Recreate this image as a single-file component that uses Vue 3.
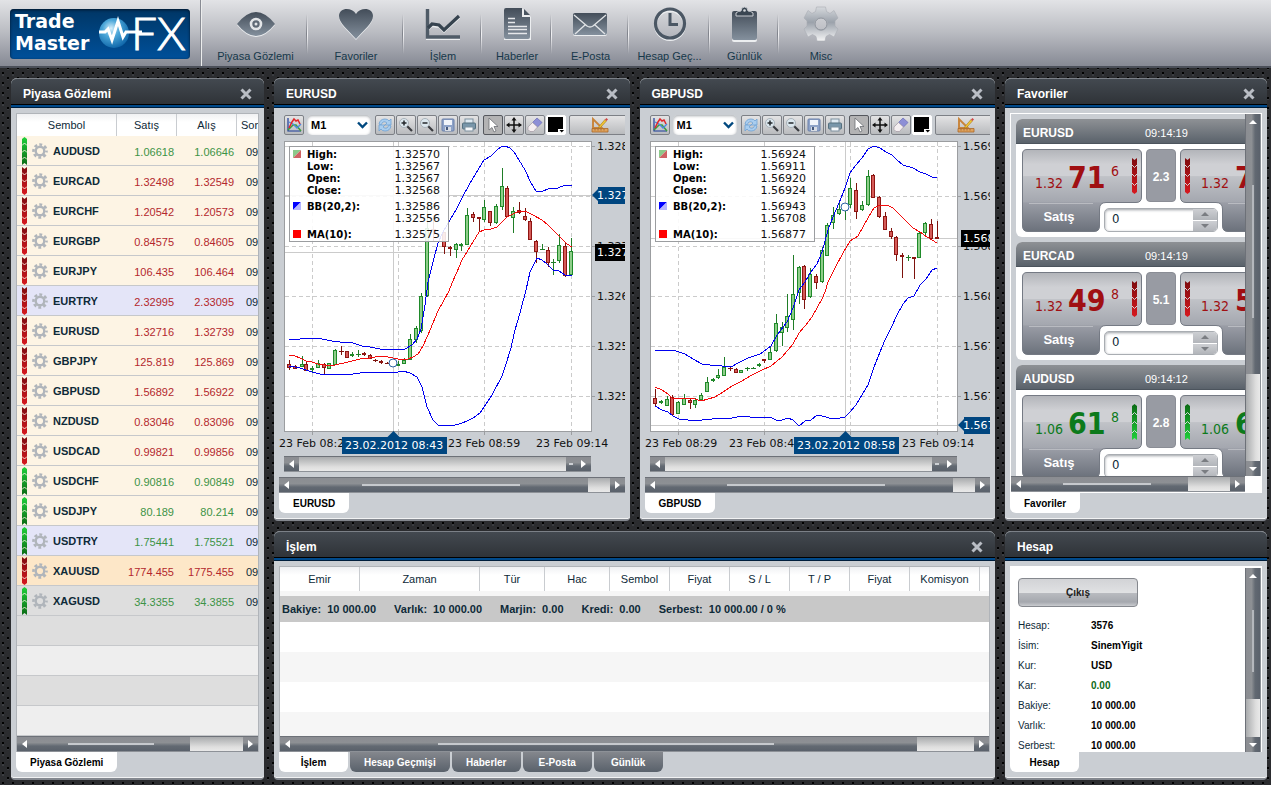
<script setup>
const navItems = [
  { label: 'Piyasa Gözlemi', icon: 'eye', width: 105 },
  { label: 'Favoriler', icon: 'heart', width: 96 },
  { label: 'İşlem', icon: 'trend', width: 78 },
  { label: 'Haberler', icon: 'news', width: 70 },
  { label: 'E-Posta', icon: 'mail', width: 77 },
  { label: 'Hesap Geç...', icon: 'clock', width: 81 },
  { label: 'Günlük', icon: 'clipboard', width: 69 },
  { label: 'Misc', icon: 'cog', width: 84 }
]

const quotes = [
  ['AUDUSD', '1.06618', '1.06646', 'up', 'cream'],
  ['EURCAD', '1.32498', '1.32549', 'down', 'cream'],
  ['EURCHF', '1.20542', '1.20573', 'down', 'cream'],
  ['EURGBP', '0.84575', '0.84605', 'down', 'cream'],
  ['EURJPY', '106.435', '106.464', 'down', 'cream'],
  ['EURTRY', '2.32995', '2.33095', 'down', 'lilac'],
  ['EURUSD', '1.32716', '1.32739', 'down', 'cream'],
  ['GBPJPY', '125.819', '125.869', 'down', 'cream'],
  ['GBPUSD', '1.56892', '1.56922', 'down', 'cream'],
  ['NZDUSD', '0.83046', '0.83096', 'down', 'cream'],
  ['USDCAD', '0.99821', '0.99856', 'down', 'cream'],
  ['USDCHF', '0.90816', '0.90849', 'up', 'cream'],
  ['USDJPY', '80.189', '80.214', 'up', 'cream'],
  ['USDTRY', '1.75441', '1.75521', 'up', 'lilac'],
  ['XAUUSD', '1774.455', '1775.455', 'down', 'peach'],
  ['XAGUSD', '34.3355', '34.3855', 'up', 'silver']
]

const tools = ['refresh', 'zoomin', 'zoomout', 'save', 'print']

// Series are stored in thirds of a pixel; the lower half of the plot starts at LOW.
const LOW = 645
const TOP = 189
const lower = (rows) => rows.map(([x, ...ys]) => [x, ...ys.map((y) => (typeof y === 'number' ? y + LOW : y))])

function makeChart(c) {
  const px = (x) => Math.round((x - c.origin) / 3)
  const py = (y) => Math.round((y - TOP) / 3)
  const line = (pts) => pts.map(([x, y]) => `${px(x)},${py(y)}`).join(' ')
  return {
    ...c,
    upperLine: line(c.upper),
    lowerLine: line(c.lowerBand),
    maLine: line(c.ma),
    bars: c.candles.map(([x, hi, lo, a, b, d]) => ({
      x: px(x), hi: py(hi), lo: py(lo), top: py(a), h: Math.max(0, py(b) - py(a)), cls: d === 'u' ? 'rise' : 'fall'
    })),
    marker: { x: px(c.cross[0]), y: py(c.cross[1]) },
    crossY: py(c.crossY),
    lastY: py(c.lastY),
    tagX: px(c.tagX)
  }
}

const charts = [
  makeChart({
    name: 'EURUSD', origin: 27,
    legend: ['1.32570', '1.32567', '1.32567', '1.32568', '1.32586', '1.32556', '1.32575'],
    axis: ['1.328', '1.327', '1.327', '1.326', '1.325', '1.325'],
    crossLabel: '1.327', lastLabel: '1.327', crossTime: '23.02.2012 08:43',
    times: ['23 Feb 08:28', '23 Feb 08:43', '23 Feb 08:59', '23 Feb 09:14'],
    cross: [370, 865], crossY: 361, lastY: 530, tagX: 216,
    upper: [
      ...lower([[58, 148], [90, 146], [130, 145], [155, 148], [185, 154], [210, 157], [240, 157], [275, 169], [300, 172], [330, 178], [405, 178], [425, 165], [440, 148], [452, 118], [458, 80], [464, 45]]),
      [475, 620], [490, 560], [505, 505], [520, 470], [540, 435], [560, 400], [580, 362], [608, 308], [625, 285], [643, 256], [662, 242], [680, 226], [695, 214], [706, 213], [720, 220], [732, 230], [748, 254], [765, 284], [782, 325], [798, 348], [820, 348], [835, 343], [865, 340], [885, 331], [906, 331]
    ],
    lowerBand: [
      ...lower([[58, 228], [75, 230], [90, 235], [108, 240], [125, 245], [150, 252], [250, 252], [290, 247], [385, 247], [400, 244], [420, 250], [440, 262], [455, 290], [470, 350], [490, 390], [505, 405], [545, 408], [575, 398], [590, 394], [610, 384], [630, 368], [643, 350], [665, 315], [695, 258], [705, 230], [722, 175], [735, 120], [750, 70], [768, 0]]),
      [780, 590], [800, 550], [815, 555], [830, 568], [850, 585], [868, 587], [885, 600], [905, 604]
    ],
    ma: [
      ...lower([[58, 196], [75, 199], [90, 204], [108, 213], [125, 216], [145, 222], [165, 225], [195, 224], [235, 216], [270, 208], [300, 204], [330, 199], [355, 200], [370, 205], [385, 208], [415, 207], [430, 200], [443, 192], [460, 168], [475, 134], [490, 100], [505, 62], [520, 36], [537, 2]]),
      [545, 625], [560, 592], [577, 555], [608, 500], [628, 470], [643, 465], [662, 463], [680, 457], [695, 442], [712, 425], [735, 414], [748, 409], [770, 411], [790, 421], [815, 434], [835, 450], [855, 472], [875, 493], [890, 507], [906, 517]
    ],
    candles: [
      ...lower([[58, 210, 240, 222, 230, 'd'], [75, 225, 235, 229, 233, 'd'], [95, 198, 228, 223, 227, 'u'], [109, 215, 244, 222, 241, 'd'], [127, 228, 250, 235, 236, 'u'], [145, 210, 235, 220, 230, 'u'], [163, 220, 252, 222, 230, 'd'], [177, 218, 236, 220, 234, 'u'], [195, 177, 225, 181, 221, 'u'], [214, 168, 196, 183, 184, 'd'], [231, 182, 202, 184, 201, 'd'], [247, 186, 202, 192, 196, 'u'], [265, 180, 202, 191, 192, 'u'], [283, 186, 198, 189, 193, 'd'], [300, 193, 208, 196, 205, 'd'], [316, 206, 217, 210, 211, 'd'], [334, 211, 221, 214, 215, 'd'], [352, 215, 222, 219, 220, 'd'], [385, 214, 226, 221, 224, 'u'], [402, 205, 218, 209, 218, 'u'], [420, 133, 210, 148, 208, 'u'], [437, 107, 158, 115, 146, 'u'], [453, 8, 129, 18, 119, 'u']]),
      [472, 400, 665, 460, 660, 'u'], [490, 430, 500, 461, 462, 'd'], [522, 470, 537, 472, 512, 'd'], [540, 512, 543, 516, 520, 'd'], [558, 505, 548, 507, 523, 'u'], [574, 503, 528, 508, 509, 'u'], [591, 400, 510, 420, 508, 'u'], [609, 410, 440, 417, 427, 'd'], [628, 425, 470, 427, 428, 'd'], [643, 376, 440, 396, 433, 'u'], [659, 408, 453, 409, 442, 'd'], [678, 388, 446, 394, 442, 'u'], [696, 280, 405, 333, 394, 'u'], [711, 333, 425, 339, 422, 'd'], [730, 397, 473, 409, 425, 'u'], [747, 380, 418, 406, 410, 'd'], [765, 400, 437, 423, 433, 'd'], [780, 430, 494, 438, 491, 'd'], [798, 495, 563, 499, 527, 'd'], [816, 507, 525, 522, 523, 'u'], [834, 516, 575, 526, 560, 'd'], [850, 552, 600, 561, 562, 'u'], [867, 478, 563, 510, 556, 'u'], [885, 503, 607, 514, 599, 'd'], [903, 490, 600, 529, 596, 'u']
    ]
  }),
  makeChart({
    name: 'GBPUSD', origin: 30,
    legend: ['1.56924', '1.56911', '1.56920', '1.56924', '1.56943', '1.56708', '1.56877'],
    axis: ['1.569', '1.569', '1.568', '1.568', '1.567', '1.567'],
    crossLabel: '1.567', lastLabel: '1.568', crossTime: '23.02.2012 08:58',
    times: ['23 Feb 08:29', '23 Feb 08:44', '23 Feb 08:59', '23 Feb 09:14'],
    cross: [631, 395], crossY: 1049, lastY: 488, tagX: 477,
    upper: [
      ...lower([[60, 181], [95, 184], [115, 181], [150, 192], [175, 208], [200, 221], [225, 225], [260, 227], [288, 232], [310, 220], [340, 204], [375, 191], [408, 169], [425, 135], [455, 95], [475, 55]]),
      [492, 645], [510, 620], [528, 590], [545, 567], [562, 530], [578, 465], [595, 425], [612, 385], [631, 340], [646, 295], [662, 270], [682, 248], [700, 222], [716, 214], [735, 218], [752, 231], [770, 241], [785, 256], [803, 271], [835, 279], [855, 291], [872, 296], [890, 307], [907, 310]
    ],
    lowerBand: [
      ...lower([[60, 349], [80, 360], [98, 366], [115, 379], [132, 386], [160, 391], [200, 390], [230, 388], [290, 385], [320, 379], [345, 382], [380, 384], [405, 382], [422, 390], [442, 391], [458, 385], [475, 390], [493, 408], [510, 394], [527, 389], [545, 376], [562, 379], [595, 388], [615, 385], [631, 380], [646, 366], [662, 345], [680, 315], [700, 284], [718, 230], [735, 185], [750, 150], [768, 115], [785, 75], [803, 43], [820, 24]]),
      [838, 663], [855, 630], [872, 612], [890, 586], [907, 580]
    ],
    ma: [
      ...lower([[60, 292], [80, 300], [98, 312], [110, 325], [150, 325], [180, 328], [198, 334], [220, 328], [240, 320], [265, 306], [290, 289], [320, 274], [350, 256], [380, 240], [408, 229], [442, 202], [475, 162], [493, 130], [510, 108], [530, 80], [547, 55], [562, 28]]),
      [570, 650], [580, 620], [600, 578], [625, 535], [646, 498], [668, 482], [685, 455], [700, 428], [718, 400], [735, 391], [755, 391], [775, 400], [790, 415], [815, 441], [835, 458], [855, 470], [875, 485], [890, 495], [907, 503]
    ],
    candles: [
      ...lower([[60, 297, 350, 324, 338, 'd'], [78, 330, 342, 334, 335, 'u'], [97, 318, 348, 328, 344, 'u'], [111, 315, 375, 322, 373, 'd'], [129, 332, 372, 337, 370, 'u'], [147, 312, 346, 323, 343, 'u'], [166, 325, 357, 331, 337, 'd'], [180, 325, 353, 330, 341, 'u'], [198, 308, 333, 315, 328, 'u'], [216, 262, 306, 277, 302, 'u'], [235, 263, 275, 268, 271, 'u'], [249, 238, 266, 256, 262, 'u'], [267, 200, 258, 231, 256, 'u'], [286, 232, 242, 234, 235, 'd'], [303, 234, 248, 237, 245, 'd'], [318, 240, 248, 241, 247, 'u'], [336, 230, 242, 233, 234, 'u'], [353, 230, 236, 233, 234, 'u'], [372, 220, 230, 223, 226, 'u'], [388, 207, 218, 208, 209, 'd'], [405, 170, 210, 186, 206, 'u'], [423, 72, 186, 99, 181, 'u'], [442, 95, 167, 112, 125, 'u'], [456, 12, 125, 78, 112, 'u']]),
      [474, 540, 765, 658, 733, 'u'], [492, 572, 688, 576, 650, 'u'], [507, 570, 702, 574, 671, 'd'], [525, 580, 668, 598, 662, 'u'], [543, 598, 642, 604, 620, 'd'], [561, 515, 625, 525, 617, 'u'], [576, 445, 543, 451, 539, 'u'], [595, 397, 462, 420, 440, 'u'], [612, 385, 420, 401, 415, 'u'], [631, 390, 435, 404, 405, 'u'], [645, 310, 400, 340, 388, 'u'], [663, 325, 432, 346, 407, 'd'], [681, 378, 408, 391, 403, 'u'], [699, 285, 392, 304, 388, 'u'], [714, 297, 370, 301, 367, 'd'], [732, 363, 428, 367, 424, 'd'], [750, 412, 465, 424, 463, 'd'], [768, 460, 491, 468, 482, 'd'], [783, 483, 557, 487, 538, 'd'], [802, 535, 608, 541, 542, 'd'], [820, 540, 558, 545, 546, 'u'], [838, 545, 612, 547, 548, 'd'], [852, 468, 548, 475, 545, 'u'], [870, 440, 483, 444, 470, 'u'], [888, 432, 493, 447, 488, 'd'], [907, 438, 488, 487, 488, 'd']
    ]
  })
]

const gridX = [33, 119, 205, 292]
const gridY = [8, 58, 108, 158, 208, 258]
const timeX = [0, 84, 169, 257]
const legendRows = [
  { label: 'High:', y: 20 }, { label: 'Low:', y: 32 }, { label: 'Open:', y: 44 }, { label: 'Close:', y: 56 },
  { label: 'BB(20,2):', y: 72 }, { label: '', y: 84 }, { label: 'MA(10):', y: 100 }
]

const favorites = [
  { name: 'EURUSD', time: '09:14:19', base: '1.32', sell: '71', pip: '6', buy: '73', spread: '2.3', dir: 'down' },
  { name: 'EURCAD', time: '09:14:19', base: '1.32', sell: '49', pip: '8', buy: '54', spread: '5.1', dir: 'down' },
  { name: 'AUDUSD', time: '09:14:12', base: '1.06', sell: '61', pip: '8', buy: '64', spread: '2.8', dir: 'up' }
]

const orderCols = [
  ['Emir', 80], ['Zaman', 120], ['Tür', 65], ['Hac', 65], ['Sembol', 60], ['Fiyat', 60],
  ['S / L', 60], ['T / P', 60], ['Fiyat', 60], ['Komisyon', 70]
]
const summary = [
  ['Bakiye:', '10 000.00'], ['Varlık:', '10 000.00'], ['Marjin:', '0.00'], ['Kredi:', '0.00'], ['Serbest:', '10 000.00 / 0 %']
]
const orderTabs = ['İşlem', 'Hesap Geçmişi', 'Haberler', 'E-Posta', 'Günlük']

const account = [
  ['Hesap:', '3576'], ['İsim:', 'SinemYigit'], ['Kur:', 'USD'], ['Kar:', '0.00', 'green'],
  ['Bakiye:', '10 000.00'], ['Varlık:', '10 000.00'], ['Serbest:', '10 000.00']
]
</script>

<template>
  <div class="page">
    <svg class="defs" width="0" height="0" aria-hidden="true">
      <defs>
        <linearGradient id="gDark" x1="0" y1="0" x2="0" y2="1"><stop offset="0" stop-color="#434d59" /><stop offset="1" stop-color="#84909d" /></linearGradient>
        <linearGradient id="gCog" x1="0" y1="0" x2="0" y2="1"><stop offset="0" stop-color="#d6d9dd" /><stop offset=".45" stop-color="#9ba2ab" /><stop offset="1" stop-color="#f4f4f5" /></linearGradient>
        <linearGradient id="gKey" x1="0" y1="0" x2="0" y2="1"><stop offset="0" stop-color="#b2b4b9" /><stop offset=".18" stop-color="#cfd0d4" /><stop offset=".32" stop-color="#cfd0d4" /><stop offset=".33" stop-color="#c0c2c7" /><stop offset=".64" stop-color="#a4a7af" /><stop offset=".65" stop-color="#9a9da6" /><stop offset="1" stop-color="#6b717b" /></linearGradient>
        <linearGradient id="gDown" x1="0" y1="0" x2="0" y2="1"><stop offset="0" stop-color="#7d0b0e" /><stop offset="1" stop-color="#d8191f" /></linearGradient>
        <linearGradient id="gUp" x1="0" y1="0" x2="0" y2="1"><stop offset="0" stop-color="#1fd03a" /><stop offset="1" stop-color="#0b6a14" /></linearGradient>
        <linearGradient id="gUpBig" x1="0" y1="0" x2="0" y2="1"><stop offset="0" stop-color="#0b6a14" /><stop offset="1" stop-color="#1fd03a" /></linearGradient>
        <radialGradient id="gGlobe" cx=".4" cy=".35" r=".7"><stop offset="0" stop-color="#d8f0fb" /><stop offset=".4" stop-color="#4ba6d8" /><stop offset="1" stop-color="#0b62a6" /></radialGradient>
      </defs>

      <symbol id="i-eye" viewBox="0 0 40 36">
        <path d="M1 19Q20 -5 39 19Q20 43 1 19Z" fill="#eceef0" />
        <path d="M1 18Q20 -6 39 18Q20 42 1 18Z" fill="url(#gDark)" />
        <circle cx="20" cy="18" r="5" fill="#5f6975" stroke="#e3e5e8" stroke-width="2.6" /><circle cx="20" cy="18" r="1.5" fill="#e3e5e8" />
      </symbol>
      <symbol id="i-heart" viewBox="0 0 40 36">
        <path d="M20 34C12 25 3 18 3 11C3 1 16 1 20 9C24 1 37 1 37 11C37 18 28 25 20 34Z" fill="#eceef0" />
        <path d="M20 33C12 24 3 17 3 10C3 1 16 1 20 8C24 1 37 1 37 10C37 17 28 24 20 33Z" fill="url(#gDark)" />
      </symbol>
      <symbol id="i-trend" viewBox="0 0 40 36">
        <g fill="none"><path d="M4.500 4V32.500H37M5 24C8 17 12 21 16 20L21 25L36 11.500" stroke="#eceef0" stroke-width="3" /><path d="M4.500 3V31H37" stroke="#4f5b67" stroke-width="3.400" /><path d="M5 22L9 18L16 19L21 24L36 10" stroke="#36434f" stroke-width="3.200" /></g>
      </symbol>
      <symbol id="i-news" viewBox="0 0 40 36">
        <path d="M7 3H26L34 11V34H7Z" fill="#eceef0" /><path d="M9 2H25V11H33V31Q33 33 31 33H9Q7 33 7 31V4Q7 2 9 2Z" fill="url(#gDark)" /><path d="M27 3L33 9H27Z" fill="#4a5561" />
        <path d="M11 12.500H18M11 16.500H18M11 20.500H30M11 23.500H30M11 27.500H30" stroke="#e6e8eb" stroke-width="1.300" />
      </symbol>
      <symbol id="i-mail" viewBox="0 0 40 36">
        <rect x="2" y="8" width="34" height="22" rx="2" fill="#eceef0" /><rect x="2" y="7" width="34" height="22" rx="2" fill="url(#gDark)" />
        <path d="M3 9L16 20Q19 22 22 20L35 9M4 28L14 19M34 28L24 19" stroke="#dfe2e5" stroke-width="1.400" fill="none" />
      </symbol>
      <symbol id="i-clock" viewBox="0 0 40 36">
        <circle cx="20" cy="19" r="14.500" fill="none" stroke="#eceef0" stroke-width="3" /><circle cx="20" cy="17.500" r="14.500" fill="none" stroke="#4b5764" stroke-width="3.200" /><path d="M20 7V18.500H28" fill="none" stroke="#4b5764" stroke-width="3" />
      </symbol>
      <symbol id="i-clipboard" viewBox="0 0 40 36">
        <rect x="7" y="6" width="25" height="30" rx="2" fill="#eceef0" /><rect x="7" y="5" width="25" height="29" rx="2" fill="url(#gDark)" />
        <path d="M11 10V7Q13 5 16 5Q16 1 19.500 1Q23 1 23 5Q26 5 28 7V10Z" fill="#3a4652" stroke="#c9ccd1" stroke-width="1" /><circle cx="19.500" cy="4.500" r="1.300" fill="#d6d9dd" />
      </symbol>
      <symbol id="i-cog" viewBox="0 0 40 36">
        <path fill="url(#gCog)" stroke="#a9adb4" stroke-width=".6" fill-rule="evenodd" d="M15.500 1H24.500L25.500 5.500L29 7.500L33 4.500L37 12L34 15V20L37 23L33 31L28.500 28.500L25 30.500L24 35H16L15 30.500L11.500 28.500L7 31L3 23L6 20V15L3 12L7 4.500L11 7.500L14.500 5.500ZM20 11.500A6.500 6.500 0 1 0 20 24.500A6.500 6.500 0 1 0 20 11.500Z" />
        <circle cx="20" cy="18" r="6" fill="none" stroke="#8e949d" stroke-width="1" />
      </symbol>

      <symbol id="i-gear" viewBox="0 0 16 16"><circle cx="8" cy="8" r="4.300" fill="none" stroke="#b0b5bb" stroke-width="2.400" /><circle cx="8" cy="8" r="6.500" fill="none" stroke="#b0b5bb" stroke-width="2.600" stroke-dasharray="2.900 2.205" stroke-dashoffset="1.450" /></symbol>
      <symbol id="i-down" viewBox="0 0 5 28"><path d="M0 0L2.500 2L5 0V26L2.500 28L0 26Z" fill="url(#gDown)" /><path d="M0 5.500L2.500 8L5 5.500M0 12.500L2.500 15L5 12.500M0 19.500L2.500 22L5 19.500" fill="none" stroke="#fdf5e6" stroke-width=".9" /></symbol>
      <symbol id="i-up" viewBox="0 0 5 28"><path d="M0 2L2.500 0L5 2V28L2.500 26L0 28Z" fill="url(#gUp)" /><path d="M0 8.500L2.500 6L5 8.500M0 15.500L2.500 13L5 15.500M0 22.500L2.500 20L5 22.500" fill="none" stroke="#fdf5e6" stroke-width=".9" /></symbol>
      <symbol id="i-close" viewBox="0 0 12 12"><path d="M1.500 1.500L10.500 10.500M10.500 1.500L1.500 10.500" stroke="#b9bdc4" stroke-width="3" /></symbol>

      <symbol id="t-indicator" viewBox="0 0 18 18"><path d="M3 2V15H16" fill="none" stroke="#1b3a9a" stroke-width="1.200" /><path d="M3 14L8 9L11 9L16 15" fill="none" stroke="#3c9e3c" stroke-width="1.500" /><path d="M4 6L8 8L12 12L16 8" fill="none" stroke="#4c88e0" stroke-width="1.300" /><path d="M4 12L7 6L9 3L11 5L13 4L15 8" fill="none" stroke="#e1262a" stroke-width="1.500" /></symbol>
      <symbol id="t-refresh" viewBox="0 0 18 18"><path d="M3 8Q4 3 9 3Q12 3 13 5L15 3V9H9L11 7Q9 5 7 6Q6 7 5 9Z" fill="#a9cdef" stroke="#6fa2d4" stroke-width=".8" /><path d="M15 10Q14 15 9 15Q6 15 5 13L3 15V9H9L7 11Q9 13 11 12Q12 11 13 9Z" fill="#a9cdef" stroke="#6fa2d4" stroke-width=".8" /></symbol>
      <symbol id="t-zoomin" viewBox="0 0 18 18"><path d="M9.500 9.500L15 15" stroke="#3a3c40" stroke-width="2.200" /><circle cx="7" cy="7" r="4.500" fill="#dbe7ee" stroke="#a9b2b9" /><path d="M7 4.500V9.500M4.500 7H9.500" stroke="#24282c" stroke-width="1.500" /></symbol>
      <symbol id="t-zoomout" viewBox="0 0 18 18"><path d="M9.500 9.500L15 15" stroke="#3a3c40" stroke-width="2.200" /><circle cx="7" cy="7" r="4.500" fill="#dbe7ee" stroke="#a9b2b9" /><path d="M4.500 7H9.500" stroke="#24282c" stroke-width="1.500" /></symbol>
      <symbol id="t-save" viewBox="0 0 18 18"><rect x="3" y="3" width="12" height="12" rx="1" fill="#8ea3c8" stroke="#6a80aa" /><rect x="5" y="4" width="8" height="5" fill="#f0f4fa" /><rect x="6" y="11" width="6" height="4" fill="#d7dce4" /><rect x="7" y="11" width="2" height="3" fill="#45597e" /></symbol>
      <symbol id="t-print" viewBox="0 0 18 18"><rect x="5" y="3" width="8" height="5" fill="#dfeaf2" stroke="#7e91a0" /><rect x="2.500" y="7" width="13" height="6" rx="1" fill="#7896aa" stroke="#55707f" /><rect x="5" y="11" width="8" height="4" fill="#f5f8fa" stroke="#7e91a0" /></symbol>
      <symbol id="t-cursor" viewBox="0 0 18 18"><path d="M5 2V14L8 11.500L10 16L12 15L10 10.500L14 10.500Z" fill="#fff" stroke="#6c6f74" stroke-width=".8" /></symbol>
      <symbol id="t-move" viewBox="0 0 18 18"><path d="M9 3V15M3 9H15" stroke="#111" stroke-width="1.500" /><path d="M9 1L11.500 4.500H6.500ZM9 17L6.500 13.500H11.500ZM1 9L4.500 6.500V11.500ZM17 9L13.500 11.500V6.500Z" fill="#111" /></symbol>
      <symbol id="t-eraser" viewBox="0 0 18 18"><path d="M11 2L16 6.500L11.500 11L6.500 6.500Z" fill="#8d8fd6" stroke="#6a6cb8" stroke-width=".7" /><path d="M6.500 6.500L11.500 11L7.500 15.500H4L2 13.500V11Z" fill="#f4eef0" stroke="#a39aa3" stroke-width=".7" /></symbol>
      <symbol id="t-ruler" viewBox="0 0 18 18"><path d="M2 3V12L11 12Z" fill="none" stroke="#c8843a" stroke-width="1.900" /><path d="M1 12.500H17V16H1Z" fill="#dfa25c" stroke="#a9672a" stroke-width=".8" /><path d="M4 13V14.500M7 13V14.500M10 13V14.500M13 13V14.500" stroke="#8a5320" stroke-width=".7" /><path d="M8 10.500L14 3.500L15.500 5L9.500 11.500L7.500 12Z" fill="#f2c733" stroke="#a3761a" stroke-width=".6" /><path d="M14 3.500L15.500 2L17 3.500L15.500 5Z" fill="#d2474a" /></symbol>
    </svg>

    <header class="topbar">
      <a class="brand" href="#" aria-label="Trade Master FX">
        <svg width="180" height="50" viewBox="0 0 180 50">
          <circle cx="104" cy="24" r="15" fill="url(#gGlobe)" />
          <text x="5" y="19" class="brand-text">Trade</text>
          <text x="5" y="41" class="brand-text">Master</text>
          <text x="121" y="41" class="brand-fx">FX</text>
          <path d="M89 23H95L98 20L102 31L108 12L113 28L116 23H132" fill="none" stroke="#fff" stroke-width="3" />
        </svg>
      </a>
      <nav class="nav">
        <button v-for="n in navItems" :key="n.label" type="button" class="nav-item" :style="{ width: n.width + 'px' }">
          <svg width="40" height="36"><use :href="'#i-' + n.icon" /></svg>
          <span>{{ n.label }}</span>
        </button>
      </nav>
    </header>

    <main class="desk">
      <section class="panel watch">
        <div class="panel-head"><h2>Piyasa Gözlemi</h2><button type="button" class="close" aria-label="Kapat"><svg width="12" height="12"><use href="#i-close" /></svg></button></div>
        <div class="panel-body">
          <div class="frame">
            <table class="quotes">
              <colgroup><col class="c-sym"><col class="c-num"><col class="c-num"><col></colgroup>
              <thead><tr><th>Sembol</th><th>Satış</th><th>Alış</th><th class="cut">Son</th></tr></thead>
              <tbody>
                <tr v-for="q in quotes" :key="q[0]" :class="q[4]">
                  <td><div class="sym"><svg width="5" height="28"><use :href="'#i-' + q[3]" /></svg><svg width="16" height="16"><use href="#i-gear" /></svg><b>{{ q[0] }}</b></div></td>
                  <td :class="['num', q[3]]">{{ q[1] }}</td>
                  <td :class="['num', q[3]]">{{ q[2] }}</td>
                  <td class="when">09</td>
                </tr>
                <tr v-for="i in 4" :key="i" :class="i % 2 ? 'blank-a' : 'blank-b'"><td colspan="4"></td></tr>
              </tbody>
            </table>
            <div class="hscroll"><button type="button" class="arr left" aria-label="Sola"></button><div class="track"></div><div class="thumb t53"></div><button type="button" class="arr right" aria-label="Sağa"></button></div>
          </div>
          <div class="tabs"><button type="button" class="tab on">Piyasa Gözlemi</button></div>
        </div>
      </section>

      <section v-for="c in charts" :key="c.name" class="panel chart">
        <div class="panel-head"><h2>{{ c.name }}</h2><button type="button" class="close" aria-label="Kapat"><svg width="12" height="12"><use href="#i-close" /></svg></button></div>
        <div class="panel-body">
          <div class="toolbar">
            <button type="button" class="tool" aria-label="Göstergeler"><svg width="18" height="18"><use href="#t-indicator" /></svg></button>
            <div class="period">
              <select :aria-label="c.name + ' periyot'"><option>M1</option></select>
              <svg width="11" height="8" viewBox="0 0 11 8"><path d="M1 1.500L5.500 6L10 1.500" fill="none" stroke="#00487f" stroke-width="2.400" /></svg>
            </div>
            <div class="group">
              <button v-for="t in tools" :key="t" type="button" class="tool" :aria-label="t"><svg width="18" height="18"><use :href="'#t-' + t" /></svg></button>
            </div>
            <div class="group">
              <button type="button" class="tool pressed" aria-label="İmleç"><svg width="18" height="18"><use href="#t-cursor" /></svg></button>
              <button type="button" class="tool" aria-label="Taşı"><svg width="18" height="18"><use href="#t-move" /></svg></button>
              <button type="button" class="tool" aria-label="Sil"><svg width="18" height="18"><use href="#t-eraser" /></svg></button>
              <button type="button" class="tool swatch" aria-label="Renk"><svg width="18" height="18" viewBox="0 0 18 18"><rect x="1" y="1" width="15" height="15" /><path d="M11 13H18V18H11Z" fill="#fff" /><path d="M12.500 14H17L14.750 16.500Z" /></svg></button>
            </div>
            <button type="button" class="tool wide" aria-label="Çizim"><svg width="18" height="18"><use href="#t-ruler" /></svg></button>
          </div>

          <div class="plot">
            <svg width="346" height="318" viewBox="0 0 346 318" shape-rendering="crispEdges">
              <rect x="5.500" y="3.500" width="307" height="290" fill="#fff" stroke="#9b9da0" />
              <g class="grid">
                <path v-for="x in gridX" :key="'x' + x" :d="`M${x + 0.5} 4V293`" />
                <path v-for="y in gridY" :key="'y' + y" :d="`M6 ${y + 0.5}H312`" />
              </g>
              <g class="ticks">
                <path v-for="x in gridX" :key="'tx' + x" :d="`M${x + 0.5} 294V297`" />
                <path v-for="y in gridY" :key="'ty' + y" :d="`M313 ${y + 0.5}H316`" />
              </g>
              <path class="guide" :d="`M6 ${c.crossY + 0.5}H312M6 ${c.lastY + 0.5}H312M${c.marker.x + 0.5} 4V293`" />
              <g v-for="b in c.bars" :key="b.x" :class="b.cls">
                <path :d="`M${b.x + 0.5} ${b.hi}V${b.lo}`" />
                <rect v-if="b.h > 0" :x="b.x - 1.5" :y="b.top + 0.5" width="3" :height="b.h" />
                <path v-else :d="`M${b.x - 2} ${b.top + 0.5}H${b.x + 3}`" />
              </g>
              <polyline class="band" :points="c.upperLine" />
              <polyline class="band" :points="c.lowerLine" />
              <polyline class="avg" :points="c.maLine" />
              <circle :cx="c.marker.x" :cy="c.marker.y" r="4" fill="#fff" stroke="#2d63a5" shape-rendering="auto" />

              <rect x="10.500" y="8.500" width="159" height="95" class="legend-box" />
              <g shape-rendering="auto">
                <path d="M14 12H22L14 20Z" fill="#8cc98a" /><path d="M22 12V20H14Z" fill="#cf6264" />
                <path d="M14 64H22L14 72Z" fill="#0000ff" /><path d="M22 64V72H14Z" fill="#b5b5ff" />
                <rect x="14" y="92" width="8" height="8" fill="#ff0000" />
              </g>
              <g v-for="(r, i) in legendRows" :key="r.y">
                <text x="28" :y="r.y" class="lg">{{ r.label }}</text>
                <text x="161" :y="r.y" class="ax" text-anchor="end">{{ c.legend[i] }}</text>
              </g>

              <text v-for="(y, i) in gridY" :key="'a' + y" x="318" :y="y + 4" class="ax">{{ c.axis[i] }}</text>
              <text v-for="(x, i) in timeX" :key="'t' + x" :x="x" y="309" class="ax">{{ c.times[i] }}</text>

              <g :transform="`translate(0 ${c.lastY})`"><rect x="316" y="-8" width="40" height="17" /><text x="318" y="4" class="ax inv">{{ c.lastLabel }}</text></g>
              <g :transform="`translate(0 ${c.crossY})`"><path d="M313 0L319 -6V-8H356V9H319V6Z" fill="#004680" shape-rendering="auto" /><text x="318" y="4" class="ax inv">{{ c.crossLabel }}</text></g>
              <g :transform="`translate(${c.tagX} 299)`"><rect width="105" height="17" fill="#004680" /><text x="3" y="12" class="ax inv">{{ c.crossTime }}</text></g>
              <path :d="`M${c.marker.x + 0.5} 293l6 6h-12z`" fill="#004680" shape-rendering="auto" />
            </svg>
          </div>
          <div class="hscroll range"><button type="button" class="arr left" aria-label="Geri"></button><div class="thumb fill"></div><button type="button" class="minus" aria-label="Daralt"></button><button type="button" class="arr right" aria-label="İleri"></button></div>
          <div class="hscroll"><button type="button" class="arr left" aria-label="Sola"></button><div class="track"></div><div class="thumb t22"></div><button type="button" class="arr right" aria-label="Sağa"></button></div>
          <div class="tabs"><button type="button" class="tab on">{{ c.name }}</button></div>
        </div>
      </section>

      <section class="panel favs">
        <div class="panel-head"><h2>Favoriler</h2><button type="button" class="close" aria-label="Kapat"><svg width="12" height="12"><use href="#i-close" /></svg></button></div>
        <div class="panel-body">
          <div class="fav-box">
            <div class="fav-view">
              <div class="fav-list">
                <article v-for="f in favorites" :key="f.name" class="card">
                  <div class="card-head"><h3>{{ f.name }}</h3><time>{{ f.time }}</time></div>
                  <div class="deal">
                    <button type="button" class="key sell" :aria-label="'Satış ' + f.name">
                      <svg width="120" height="83" viewBox="0 0 120 83">
                        <path class="key-shape" d="M5 .5H115Q119.500 .5 119.500 5V48Q119.500 53.500 114 53.500H84Q77.500 53.500 77.500 60V77Q77.500 82.500 72 82.500H6Q.5 82.500 .5 77V5Q.5 .5 5 .5Z" />
                        <path d="M7 54.500H71" stroke="#b9bbc1" />
                        <g :class="f.dir"><text x="13" y="39" class="sm">{{ f.base }}</text><text x="46" y="39" class="lgx">{{ f.sell }}</text><text x="89" y="27" class="sm">{{ f.pip }}</text></g>
                        <svg v-if="f.dir === 'down'" x="110" y="9" width="5" height="36" viewBox="0 0 5 36"><path d="M0 0L2.500 2L5 0V34L2.500 36L0 34Z" fill="url(#gDown)" /><path d="M0 7L2.500 9.500L5 7M0 16L2.500 18.500L5 16M0 25L2.500 27.500L5 25" class="nick" /></svg>
                        <svg v-else x="110" y="9" width="5" height="36" viewBox="0 0 5 36"><path d="M0 2L2.500 0L5 2V36L2.500 34L0 36Z" fill="url(#gUpBig)" /><path d="M0 11L2.500 8.500L5 11M0 20L2.500 17.500L5 20M0 29L2.500 26.500L5 29" class="nick" /></svg>
                        <text x="37" y="72" class="cap">Satış</text>
                      </svg>
                    </button>
                    <div class="spread">{{ f.spread }}</div>
                    <button type="button" class="key buy" :aria-label="'Alış ' + f.name">
                      <svg width="120" height="83" viewBox="0 0 120 83">
                        <path class="key-shape" d="M115 .5H5Q.5 .5 .5 5V48Q.5 53.500 6 53.500H36Q42.500 53.500 42.500 60V77Q42.500 82.500 48 82.500H114Q119.500 82.500 119.500 77V5Q119.500 .5 115 .5Z" />
                        <path d="M48 54.500H113" stroke="#b9bbc1" />
                        <g :class="f.dir"><text x="21" y="39" class="sm">{{ f.base }}</text><text x="55" y="39" class="lgx">{{ f.buy }}</text></g>
                        <svg v-if="f.dir === 'down'" x="5" y="9" width="5" height="36" viewBox="0 0 5 36"><path d="M0 0L2.500 2L5 0V34L2.500 36L0 34Z" fill="url(#gDown)" /><path d="M0 7L2.500 9.500L5 7M0 16L2.500 18.500L5 16M0 25L2.500 27.500L5 25" class="nick" /></svg>
                        <svg v-else x="5" y="9" width="5" height="36" viewBox="0 0 5 36"><path d="M0 2L2.500 0L5 2V36L2.500 34L0 36Z" fill="url(#gUpBig)" /><path d="M0 11L2.500 8.500L5 11M0 20L2.500 17.500L5 20M0 29L2.500 26.500L5 29" class="nick" /></svg>
                      </svg>
                    </button>
                    <div class="amount">
                      <input type="text" value="0" :aria-label="f.name + ' miktar'">
                      <div class="spin"><button type="button" class="inc" aria-label="Artır"></button><button type="button" class="dec" aria-label="Azalt"></button></div>
                    </div>
                  </div>
                </article>
              </div>
              <div class="vscroll"><button type="button" class="arr up" aria-label="Yukarı"></button><div class="track"></div><div class="thumb v87"></div><button type="button" class="arr down" aria-label="Aşağı"></button></div>
            </div>
            <div class="hscroll"><button type="button" class="arr left" aria-label="Sola"></button><div class="track"></div><div class="thumb t42"></div><button type="button" class="arr right" aria-label="Sağa"></button></div>
          </div>
          <div class="tabs"><button type="button" class="tab on">Favoriler</button></div>
        </div>
      </section>

      <section class="panel orders">
        <div class="panel-head"><h2>İşlem</h2><button type="button" class="close" aria-label="Kapat"><svg width="12" height="12"><use href="#i-close" /></svg></button></div>
        <div class="panel-body">
          <div class="frame">
            <table class="order-table">
              <colgroup><col v-for="(o, i) in orderCols" :key="i" :style="{ width: o[1] + 'px' }"><col></colgroup>
              <thead><tr><th v-for="(o, i) in orderCols" :key="i">{{ o[0] }}</th><th></th></tr></thead>
              <tbody><tr><td colspan="11"><div class="sums"><span v-for="s in summary" :key="s[0]"><b>{{ s[0] }}</b><b>{{ s[1] }}</b></span></div></td></tr></tbody>
            </table>
            <div class="stripes"></div>
            <div class="hscroll"><button type="button" class="arr left" aria-label="Sola"></button><div class="track"></div><div class="thumb t57"></div><button type="button" class="arr right" aria-label="Sağa"></button></div>
          </div>
          <div class="tabs"><button v-for="(t, i) in orderTabs" :key="t" type="button" :class="['tab', { on: i === 0 }]">{{ t }}</button></div>
        </div>
      </section>

      <section class="panel acct">
        <div class="panel-head"><h2>Hesap</h2></div>
        <div class="panel-body">
          <div class="acct-box">
            <div class="acct-main">
              <button type="button" class="logout">Çıkış</button>
              <dl><div v-for="a in account" :key="a[0]"><dt>{{ a[0] }}</dt><dd :class="a[2]">{{ a[1] }}</dd></div></dl>
            </div>
            <div class="vscroll"><button type="button" class="arr up" aria-label="Yukarı"></button><div class="track"></div><div class="thumb v38"></div><button type="button" class="arr down" aria-label="Aşağı"></button></div>
          </div>
          <div class="tabs"><button type="button" class="tab on">Hesap</button></div>
        </div>
      </section>
    </main>
  </div>
</template>

<style>
html, body { background: #2b2c2f; }
</style>

<style scoped>
* { box-sizing: border-box; }
button, input, select { font: inherit; margin: 0; padding: 0; border: 0; background: none; color: inherit; }
h2, h3, dl, dd { margin: 0; }
table { border-collapse: separate; border-spacing: 0; }
svg { display: block; flex: none; }
.defs { position: absolute; }

.page {
  min-height: 100vh;
  display: flex;
  flex-direction: column;
  overflow: hidden;
  font: 11px/14px "Liberation Sans", Arial, sans-serif;
  color: #0e2a38;
  background-color: #2b2c2f;
  background-size: 10px 10px;
  background-image:
    radial-gradient(circle at 3px 3px, #000 1px, transparent 1px),
    radial-gradient(circle at 8px 8px, #000 1px, transparent 1px),
    radial-gradient(circle at 3px 5px, #3b3d41 1px, transparent 1px),
    radial-gradient(circle at 8px 10px, #3b3d41 1px, transparent 1px);
}

.topbar { height: 68px; flex: none; display: flex; background: linear-gradient(#e2e3e6, #b9bbc1 50%, #868994); border-bottom: 2px solid #4b4f59; }
.brand { width: 202px; padding: 9px 0 0 10px; border-right: 1px solid #eceded; box-shadow: inset -1px 0 #888b93; }
.brand svg { border-radius: 4px; background: linear-gradient(#003665, #00509a); box-shadow: inset 0 1px 3px #00162c; }
.brand-text { font: bold 19px "DejaVu Sans", sans-serif; fill: #fff; }
.brand-fx { font: 300 46px Lato, "Open Sans", sans-serif; fill: #fff; stroke: #fff; stroke-width: 1px; }
.nav { display: flex; padding-left: 1px; }
.nav-item {
  flex: none; display: flex; flex-direction: column; align-items: center; padding-top: 6px; color: #16384a;
  background: linear-gradient(rgba(240,240,242,0), #f2f2f4 50%, rgba(240,240,242,0)) right 0 top 14px / 1px 40px no-repeat, linear-gradient(rgba(120,123,130,0), #7f828a 50%, rgba(120,123,130,0)) right 1px top 14px / 1px 40px no-repeat;
}
.nav-item:last-child { background: none; }
.nav-item span { margin-top: 7px; white-space: nowrap; }

.desk { flex: 1; display: grid; grid-template-columns: 253px minmax(0, 1fr) minmax(0, 1fr) 262px; grid-template-rows: auto 1fr; gap: 10px; padding: 10px 4px 5px 11px; }
.watch { grid-row: 1 / 3; }
.orders { grid-column: 2 / 4; }
.panel { display: flex; flex-direction: column; min-width: 0; min-height: 0; background: #caced3; border-radius: 6px 6px 4px 4px; border-bottom: 2px solid #84888f; box-shadow: inset 0 -1px #f1f2f3; }
.panel-head { flex: none; height: 30px; display: flex; justify-content: space-between; align-items: center; padding: 1px 12px 0; border-radius: 6px 6px 0 0; border-top: 1px solid #7b8087; background: linear-gradient(#434950, #2f3338 25px, #000 25px, #000 26px, #00498a 26px, #00498a 28px, #001e3c 28px); }
.panel-head h2 { font-size: 12px; line-height: 28px; font-weight: bold; color: #fff; }
.panel-body { flex: 1; min-height: 0; display: flex; flex-direction: column; padding: 5px 5px 6px; }
.frame { flex: 1; min-height: 0; display: flex; flex-direction: column; border: solid #b0b4b9; border-width: 1px 1px 0; background: #fff; overflow: hidden; }

.quotes { width: 100%; table-layout: fixed; }
.c-sym { width: 100px; }
.c-num { width: 60px; }
.quotes th, .order-table th { padding: 0; font-weight: normal; text-align: center; background: linear-gradient(#f0f1f3, #fff 8px); border-right: 1px solid #c9ccd0; }
.quotes th { height: 22px; }
.quotes th:last-child, .order-table th:last-child { border-right: 0; }
.quotes th.cut { text-align: left; padding-left: 4px; overflow: hidden; }
.quotes td { height: 30px; padding: 2px 0 0; border-bottom: 1px solid #c6c8cb; overflow: hidden; white-space: nowrap; }
.quotes td:first-child { padding-top: 1px; }
.sym { display: flex; align-items: center; gap: 5px; padding-left: 5px; }
.quotes td.num { text-align: right; padding-right: 3px; }
.quotes td.num.up { color: #3c9346; }
.quotes td.num.down { color: #b3282e; }
.quotes td.when { padding-left: 9px; }
.cream { background: #fdf4e4; }
.lilac { background: #e4e5f8; }
.peach { background: #fde7c8; }
.silver, .blank-a { background: #dedede; }
.blank-b { background: #eee; }

.hscroll { flex: none; height: 16px; display: flex; border-top: 1px solid #6d7178; border-bottom: 1px solid #8d9197; background: linear-gradient(#8b8d92, #8d9094 40%, #626972 65%, #5a616b); }
.vscroll { flex: none; width: 16px; display: flex; flex-direction: column; border-left: 1px solid #6d7178; border-right: 1px solid #8d9197; background: linear-gradient(90deg, #8b8d92, #8d9094 40%, #626972 65%, #5a616b); }
.arr { flex: none; width: 15px; height: 14px; display: grid; place-items: center; }
.vscroll .arr { width: 14px; height: 15px; }
.arr::before { content: ""; border: 4px solid transparent; }
.arr.left::before { border-right: 5px solid #fff; border-left: 0; }
.arr.right::before { border-left: 5px solid #fff; border-right: 0; }
.arr.up::before { border-bottom: 4px solid #fff; border-top: 0; }
.arr.down::before { border-top: 4px solid #fff; border-bottom: 0; }
.track { flex: 1; display: grid; place-items: center; }
.hscroll .track::before { content: ""; width: 54%; height: 2px; background: #c6c9cd; }
.vscroll .track::before { content: ""; width: 2px; height: 54%; background: #b4b7bc; }
.thumb { flex: none; background: linear-gradient(#a9abad, #dedede 70%, #e9e9e9); }
.vscroll .thumb { background: linear-gradient(90deg, #a9abad, #dedede 70%, #e9e9e9); }
.thumb.fill { flex: 1; }
.t53 { width: 53px; }
.t22 { width: 22px; }
.t42 { width: 42px; }
.t57 { width: 57px; }
.v87 { height: 87px; }
.v38 { height: 38px; }
.minus { width: 10px; display: grid; place-items: center; }
.minus::before { content: ""; width: 4px; height: 2px; background: #cdd0d4; }

.tabs { flex: none; display: flex; gap: 2px; }
.tab { min-width: 69px; height: 20px; padding: 1px 14px 0; border-radius: 0 0 6px 6px; font-size: 10px; font-weight: bold; color: #fff; background: linear-gradient(#84878d, #59616b); }
.tab.on { background: #fff; color: #000; }

.chart .panel-body { padding-top: 7px; }
.toolbar { display: flex; height: 20px; padding-left: 5px; overflow: hidden; }
.group { display: flex; gap: 1px; margin-right: 4px; }
.group + .group { margin-right: 3px; }
.tool { flex: none; width: 20px; height: 20px; display: grid; place-items: center; border: 1px solid #7d8086; border-radius: 2px; background: linear-gradient(#e3e3e4, #b9bbbe); }
.tool.pressed { background: #b3b3b4; border-color: #55585e; }
.tool.swatch { background: #fff; border-color: #fff; }
.tool.wide { width: 62px; }
.period { flex: none; width: 64px; margin: 0 4px 0 3px; display: grid; align-items: center; }
.period select, .period svg { grid-area: 1 / 1; }
.period select { appearance: none; width: 64px; height: 20px; padding-left: 4px; border-radius: 5px; background: #fff; box-shadow: inset 0 1px 3px #a5a9ae; font-weight: bold; color: #000; }
.period svg { justify-self: end; margin-right: 3px; pointer-events: none; }
.plot { margin-top: 3px; overflow: hidden; }
.grid path { stroke: #cbcbcb; stroke-dasharray: 4 3; }
.ticks path { stroke: #9b9da0; }
.guide { stroke: #cbcbcb; fill: none; }
.rise path { stroke: #1f7d27; }
.rise rect { stroke: #1f8a2a; fill: #8fce8a; }
.fall path { stroke: #7d120c; }
.fall rect { stroke: #8e1512; fill: #d45b58; }
.band { fill: none; stroke: #0000f0; }
.avg { fill: none; stroke: #f40b0b; }
.legend-box { fill: #fff; fill-opacity: .88; stroke: #9b9da0; }
.ax { font: 11px "DejaVu Sans", Verdana, sans-serif; fill: #111; }
.ax.inv { fill: #fff; }
.lg { font: bold 10px "DejaVu Sans", Verdana, sans-serif; fill: #000; }
.range { width: 307px; margin: 0 0 5px 5px; }

.fav-box { flex: 1; min-height: 0; display: flex; flex-direction: column; border: 1px solid #fff; background: #fff; }
.fav-view { flex: 1 1 0; min-height: 0; display: flex; }
.fav-list { flex: 1; min-width: 0; overflow: hidden; padding: 5px 0 0 5px; background: #caced3; display: flex; flex-direction: column; gap: 5px; }
.fav-box > .hscroll { margin-right: 16px; }
.card { flex: none; width: 300px; height: 118px; border-radius: 6px; background: #fff; }
.card-head { height: 25px; display: flex; align-items: center; padding: 3px 0 0 7px; color: #fff; border-radius: 6px 0 0 0; border-bottom: 1px solid #4c545d; background: linear-gradient(#8e9195, #5a626b); }
.card-head h3 { width: 122px; font-size: 12px; }
.deal { display: grid; grid-template-columns: 120px 30px 120px; grid-template-rows: 53px 30px; column-gap: 4px; padding: 5px 0 0 6px; }
.key.sell { grid-area: 1 / 1 / 3 / 2; }
.key.buy { grid-area: 1 / 3 / 3 / 4; }
.key-shape { fill: url(#gKey); stroke: #757a84; }
.spread { grid-area: 1 / 2; display: grid; place-items: center; padding-top: 3px; border-radius: 4px; background: #989ba3; border: 1px solid #8a8d95; color: #fff; font-size: 12px; font-weight: bold; }
.amount { grid-area: 2 / 1 / 3 / 4; width: 114px; height: 24px; margin: 6px 0 0 82px; display: flex; z-index: 1; border-radius: 5px; border: 1px solid #a9adb2; background: #fff; box-shadow: inset 0 1px 3px #9b9fa5; overflow: hidden; }
.amount input { flex: 1; min-width: 0; padding: 0 0 3px 7px; font: 13px/16px "DejaVu Sans Condensed", "DejaVu Sans", sans-serif; color: #0e2a38; }
.spin { width: 24px; display: flex; flex-direction: column; gap: 1px; background: #fff; }
.spin button { flex: 1; display: grid; place-items: center; background: linear-gradient(#cdcfd3, #b2b5ba); }
.spin button::before { content: ""; border: 4px solid transparent; }
.spin .inc::before { border-bottom-color: #7a7d82; border-top: 0; }
.spin .dec::before { border-top-color: #7a7d82; border-bottom: 0; }
.sm { font: 14px "DejaVu Sans Condensed", "DejaVu Sans", sans-serif; }
.lgx { font: bold 30px "DejaVu Sans Condensed", "DejaVu Sans", sans-serif; }
.cap { font: bold 13px "Liberation Sans", Arial, sans-serif; fill: #fff; text-anchor: middle; }
g.down text { fill: #a00f12; }
g.up text { fill: #0c7a1b; }
.nick { fill: none; stroke: #d5d6da; stroke-width: 1; }

.order-table { width: 100%; table-layout: fixed; }
.order-table th { height: 24px; }
.order-table td { height: 31px; padding: 0; border-top: 5px solid #f6f6f6; background: #c8c8c8; }
.sums { display: flex; gap: 18px; padding-left: 2px; white-space: nowrap; }
.sums span { display: flex; gap: 6px; }
.stripes { flex: 1; background: repeating-linear-gradient(#fff 0 30px, #f6f6f6 30px 60px); }

.acct-box { flex: 1; min-height: 0; display: flex; background: #fff; padding: 2px 1px 0 0; overflow: hidden; }
.acct-main { flex: 1; padding: 10px 0 0 8px; height: 0; }
.logout { width: 120px; height: 29px; border: 1px solid #85888e; border-radius: 4px; background: linear-gradient(#d2d3d6, #e0e1e3 50%, #b9bbc0 52%, #a5a8ae 85%, #c9cbcf); font-size: 10px; font-weight: bold; color: #222; }
.acct-main dl { margin-top: 9px; font-size: 10px; }
.acct-main dl div { display: flex; line-height: 20px; }
.acct-main dt { width: 73px; }
.acct-main dd { font-weight: bold; color: #000; }
.acct-main dd.green { color: #0c6b16; }
</style>
